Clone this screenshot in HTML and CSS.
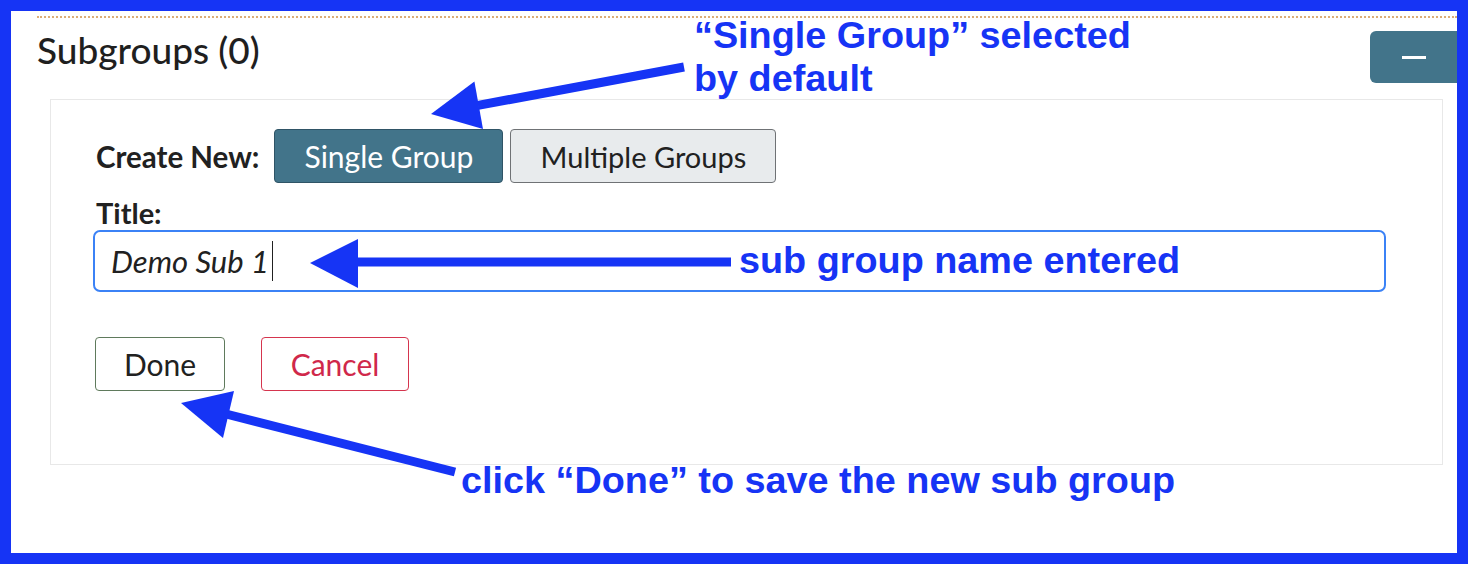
FILE: index.html
```html
<!DOCTYPE html>
<html>
<head>
<meta charset="utf-8">
<link rel="stylesheet" href="styles.css">
</head>
<body>
<div class="frame">
  <div class="panel">
    <div class="head">
      <h2 class="title">Subgroups (0)</h2>
      <button class="collapse" aria-label="collapse"><span class="minus"></span></button>
    </div>
    <div class="card">
      <div class="create-row">
        <span class="label">Create New:</span>
        <button class="btn btn-active">Single Group</button>
        <button class="btn btn-light">Multiple Groups</button>
      </div>
      <label class="field-label">Title:</label>
      <div class="input"><span class="value">Demo Sub 1</span><span class="caret"></span></div>
      <div class="actions">
        <button class="btn btn-done">Done</button>
        <button class="btn btn-cancel">Cancel</button>
      </div>
    </div>
  </div>
</div>

<div class="note note-1">“Single Group” selected<br>by default</div>
<div class="note note-2">sub group name entered</div>
<div class="note note-3">click “Done” to save the new sub group</div>

<svg class="arrows" width="1468" height="564" viewBox="0 0 1468 564">
  <g fill="#1634f5" stroke="#1634f5">
    <line x1="478" y1="105.4" x2="684" y2="67" stroke-width="9"/>
    <polygon points="431,114 474.4,81.6 483,129" stroke="none"/>
    <line x1="356" y1="262" x2="731" y2="262" stroke-width="9"/>
    <polygon points="310,263 358,239 358,288" stroke="none"/>
    <line x1="226" y1="414" x2="455" y2="472" stroke-width="9"/>
    <polygon points="181,403 234,391 223,438" stroke="none"/>
  </g>
</svg>
</body>
</html>
```

FILE: styles.css
```css
html, body {
  margin: 0;
  padding: 0;
}
body {
  position: relative;
  width: 1468px;
  height: 564px;
  background: #ffffff;
  font-family: "Lato", "Noto Sans", sans-serif;
  color: #212121;
}
.frame {
  box-sizing: border-box;
  width: 1468px;
  height: 564px;
  border: 11px solid #1634f5;
  overflow: hidden;
  background: #ffffff;
}
.panel {
  box-sizing: border-box;
  margin: 5px 0 0 26px;
  height: 539px;
  border-top: 2px dotted #dcae78;
  border-bottom: 2px dotted #c9bcb2;
}
.head {
  display: flex;
  justify-content: space-between;
  align-items: flex-start;
  height: 81px;
}
.title {
  margin: 10px 0 0 0;
  font-size: 37px;
  line-height: 44px;
  font-weight: 500;
  color: #1f1f1f;
}
.collapse {
  box-sizing: border-box;
  margin-top: 13px;
  margin-right: -8px;
  width: 95px;
  height: 52px;
  border: none;
  border-radius: 6px;
  background: #42748a;
  display: flex;
  align-items: center;
  justify-content: center;
  padding: 0 8px 0 0;
}
.minus {
  display: block;
  width: 24px;
  height: 3px;
  background: #ffffff;
}
.card {
  box-sizing: border-box;
  margin: 0 14px 0 13px;
  height: 366px;
  border: 1px solid #e8e8e8;
  padding: 29px 0 0 45px;
}
.create-row {
  display: flex;
  align-items: center;
}
.label {
  font-weight: 700;
  font-size: 29.5px;
  margin-right: 15px;
}
.btn {
  box-sizing: border-box;
  font-family: "Lato", "Noto Sans", sans-serif;
  font-size: 30px;
  height: 54px;
  border-radius: 4px;
  padding: 0;
  background: #ffffff;
  color: #212121;
}
.btn-active {
  width: 229px;
  background: #42748a;
  border: 1px solid #2f5466;
  color: #ffffff;
  margin-right: 7px;
}
.btn-light {
  width: 266px;
  font-size: 29px;
  background: #e8ebed;
  border: 1px solid #6f7275;
  color: #212121;
}
.field-label {
  display: block;
  margin-top: 15px;
  font-weight: 700;
  font-size: 29px;
  line-height: 29px;
}
.input {
  box-sizing: border-box;
  margin: 3px 0 0 -3px;
  width: 1293px;
  height: 62px;
  border: 2px solid #3b82f6;
  border-radius: 7px;
  display: flex;
  align-items: center;
  padding-left: 16px;
}
.value {
  font-style: italic;
  font-size: 31px;
  color: #212121;
}
.caret {
  display: inline-block;
  width: 1px;
  height: 40px;
  background: #212121;
  margin-left: 3px;
}
.actions {
  display: flex;
  gap: 36px;
  margin: 45px 0 0 -1px;
}
.btn-done {
  width: 130px;
  border: 1px solid #5f7a5c;
  color: #212121;
}
.btn-cancel {
  width: 148px;
  border: 1px solid #d5354e;
  color: #d0284a;
}
.note {
  position: absolute;
  font-family: "Liberation Sans", Arial, sans-serif;
  font-weight: 700;
  font-size: 37.8px;
  line-height: 43px;
  color: #1634f5;
  white-space: nowrap;
}
.note-1 {
  left: 694px;
  top: 14px;
}
.note-2 {
  left: 739px;
  top: 239px;
}
.note-3 {
  left: 461px;
  top: 459px;
}
.arrows {
  position: absolute;
  left: 0;
  top: 0;
  pointer-events: none;
}
```
